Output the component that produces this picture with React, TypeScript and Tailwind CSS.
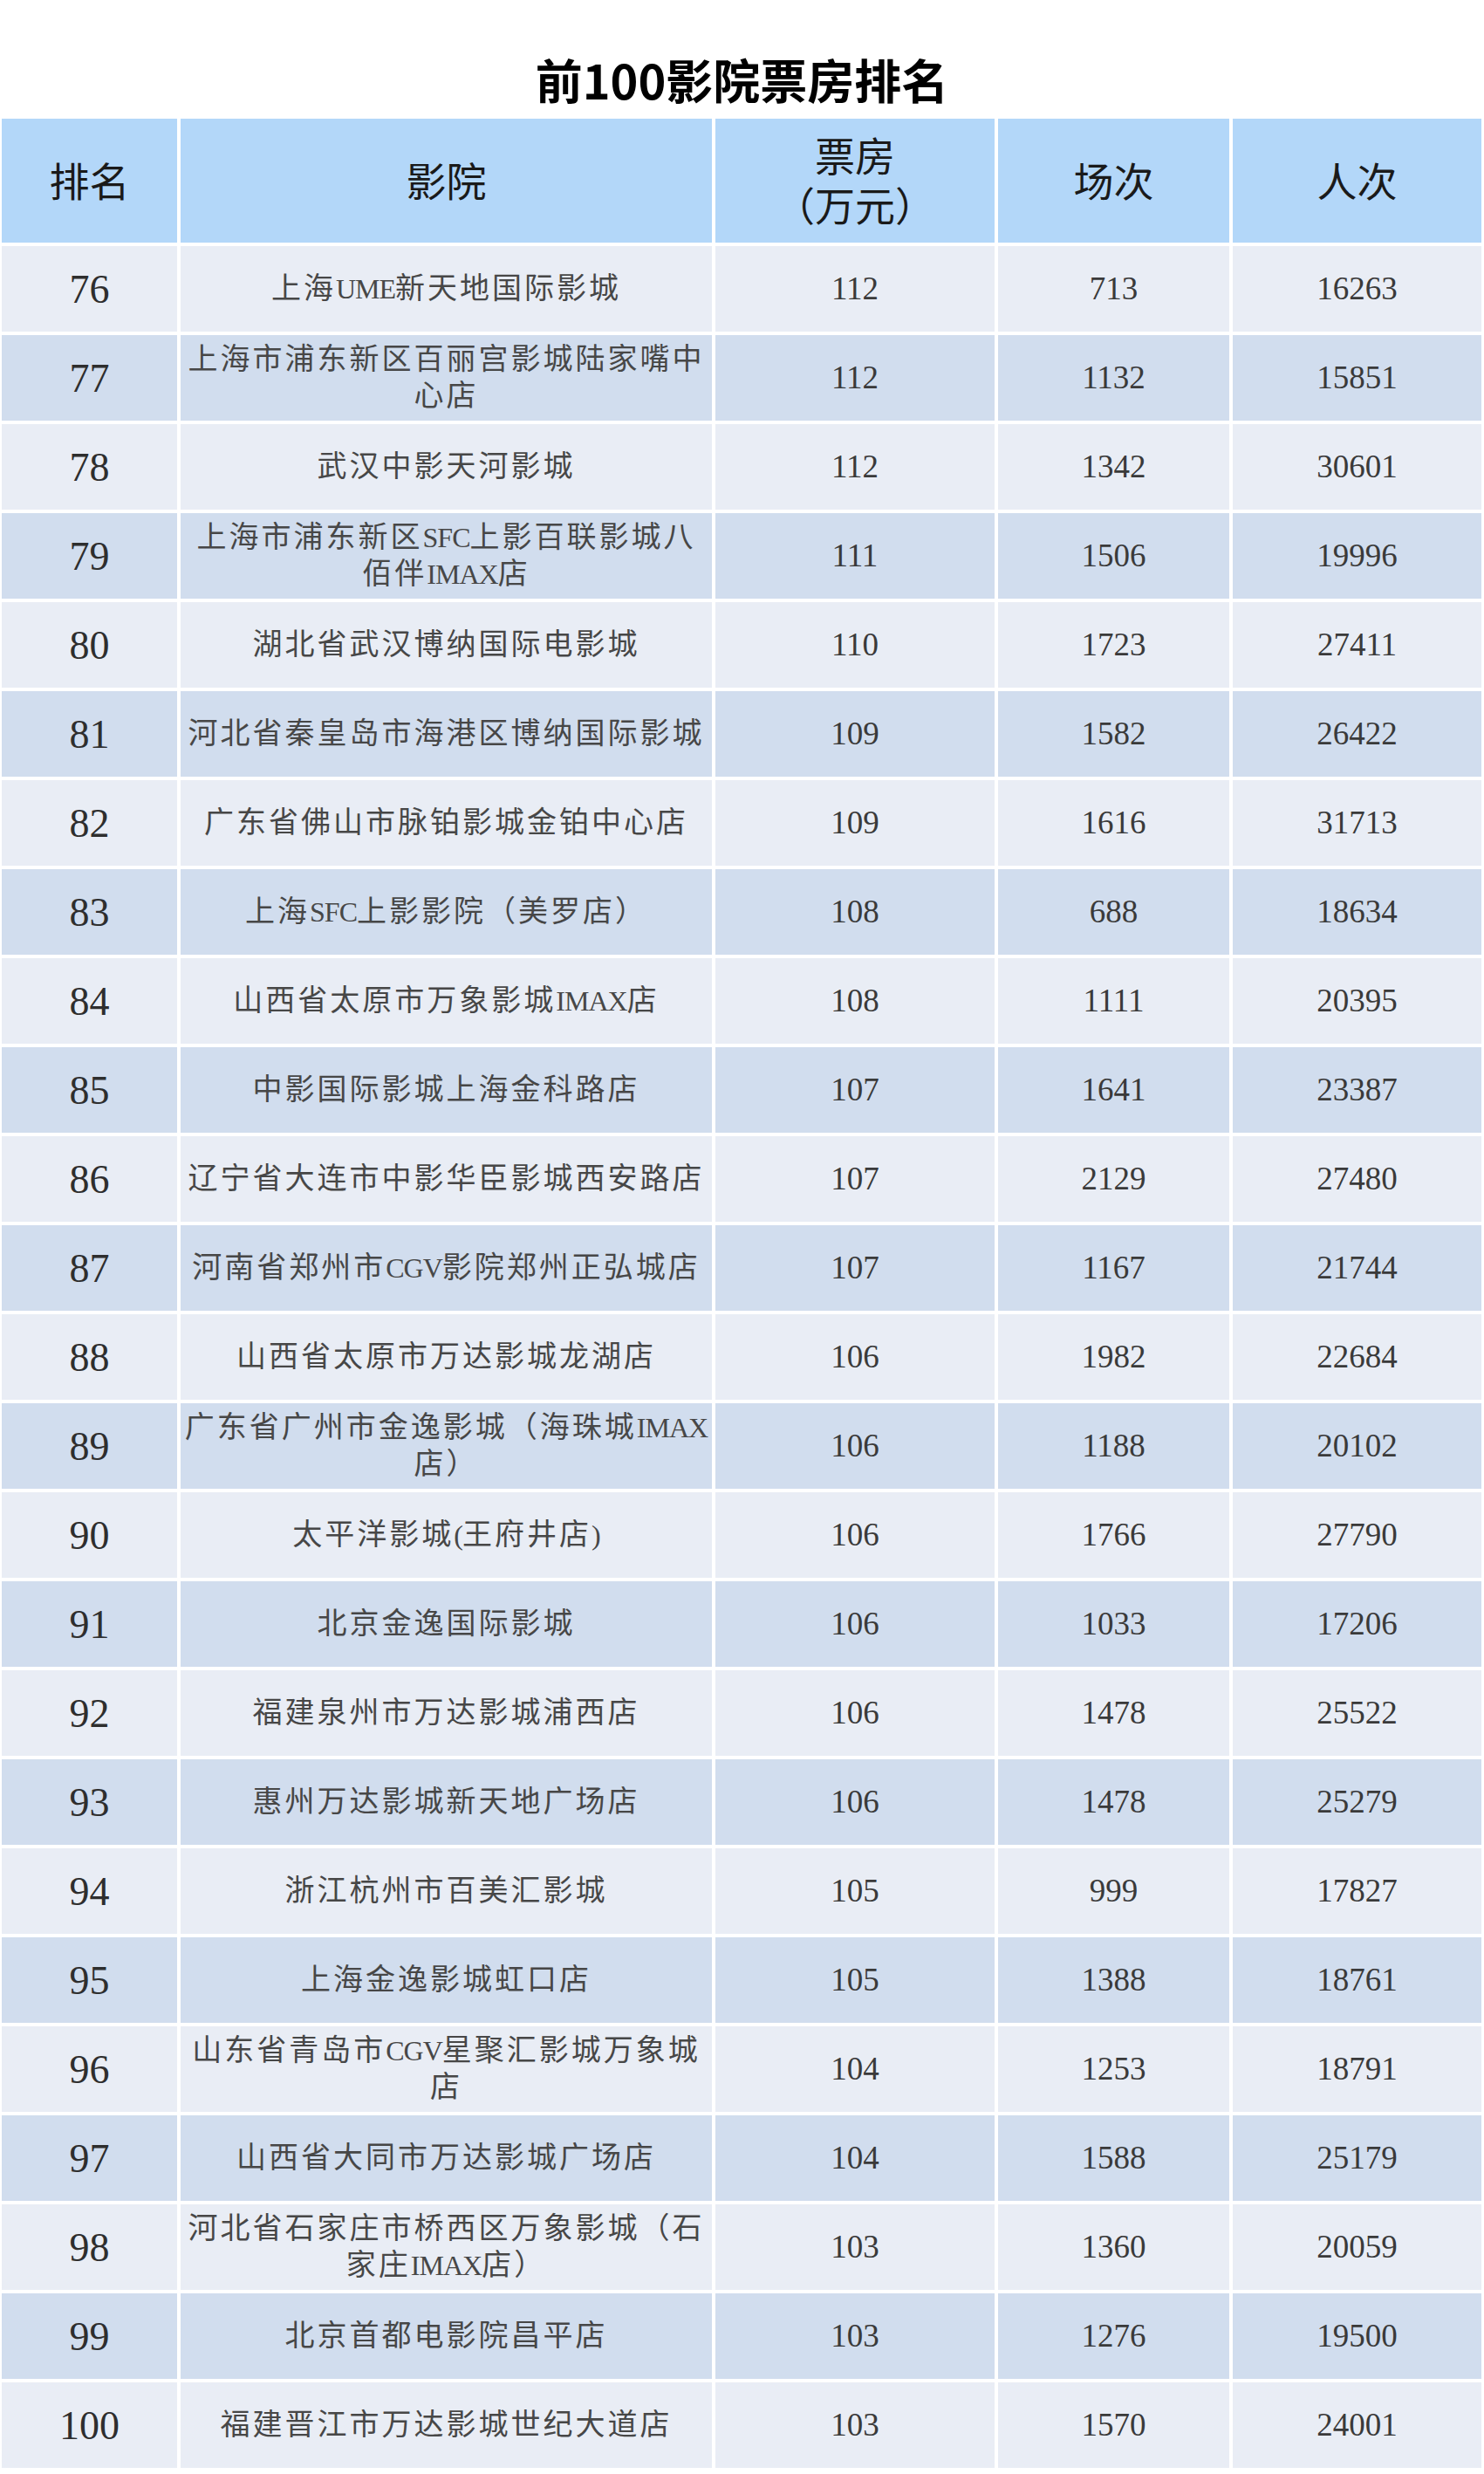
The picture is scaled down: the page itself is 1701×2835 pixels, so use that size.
const rows: [string, string[], string, string, string][] = [
  ["76", ["上海UME新天地国际影城"], "112", "713", "16263"],
  ["77", ["上海市浦东新区百丽宫影城陆家嘴中", "心店"], "112", "1132", "15851"],
  ["78", ["武汉中影天河影城"], "112", "1342", "30601"],
  ["79", ["上海市浦东新区SFC上影百联影城八", "佰伴IMAX店"], "111", "1506", "19996"],
  ["80", ["湖北省武汉博纳国际电影城"], "110", "1723", "27411"],
  ["81", ["河北省秦皇岛市海港区博纳国际影城"], "109", "1582", "26422"],
  ["82", ["广东省佛山市脉铂影城金铂中心店"], "109", "1616", "31713"],
  ["83", ["上海SFC上影影院（美罗店）"], "108", "688", "18634"],
  ["84", ["山西省太原市万象影城IMAX店"], "108", "1111", "20395"],
  ["85", ["中影国际影城上海金科路店"], "107", "1641", "23387"],
  ["86", ["辽宁省大连市中影华臣影城西安路店"], "107", "2129", "27480"],
  ["87", ["河南省郑州市CGV影院郑州正弘城店"], "107", "1167", "21744"],
  ["88", ["山西省太原市万达影城龙湖店"], "106", "1982", "22684"],
  ["89", ["广东省广州市金逸影城（海珠城IMAX", "店）"], "106", "1188", "20102"],
  ["90", ["太平洋影城(王府井店)"], "106", "1766", "27790"],
  ["91", ["北京金逸国际影城"], "106", "1033", "17206"],
  ["92", ["福建泉州市万达影城浦西店"], "106", "1478", "25522"],
  ["93", ["惠州万达影城新天地广场店"], "106", "1478", "25279"],
  ["94", ["浙江杭州市百美汇影城"], "105", "999", "17827"],
  ["95", ["上海金逸影城虹口店"], "105", "1388", "18761"],
  ["96", ["山东省青岛市CGV星聚汇影城万象城", "店"], "104", "1253", "18791"],
  ["97", ["山西省大同市万达影城广场店"], "104", "1588", "25179"],
  ["98", ["河北省石家庄市桥西区万象影城（石", "家庄IMAX店）"], "103", "1360", "20059"],
  ["99", ["北京首都电影院昌平店"], "103", "1276", "19500"],
  ["100", ["福建晋江市万达影城世纪大道店"], "103", "1570", "24001"],
];

const serif = "font-['Liberation_Serif','Noto_Sans_CJK_SC',serif]";

function HeadCell({ children }: { children: React.ReactNode }) {
  return (
    <div
      className={`flex h-[142px] flex-col items-center justify-center pt-[4px] bg-[#b3d7f9] text-[46px] leading-[57px] text-[#1a1a1a] ${serif}`}
    >
      {children}
    </div>
  );
}

// latin bits in the names are set tighter than the CJK characters
function NameLine({ text }: { text: string }) {
  const parts = text.split(/([A-Za-z()]+)/).filter(Boolean);
  return (
    <span className="whitespace-nowrap">
      {parts.map((p, i) =>
        /^[A-Za-z()]+$/.test(p) ? (
          <span key={i} className="text-[32px] tracking-[-1px]">
            {p}
          </span>
        ) : (
          <span key={i}>{p}</span>
        ),
      )}
    </span>
  );
}

export default function App() {
  return (
    <div className="min-h-[2835px] w-[1701px] bg-white">
      <div className="flex h-[136px] items-start justify-center pt-[63px]">
        <h1 className="font-['Noto_Sans_CJK_SC',sans-serif] text-[54px] font-bold leading-[56px] text-black">
          前100影院票房排名
        </h1>
      </div>
      <div className="grid grid-cols-[201px_609px_320px_265px_285px] gap-[4px] px-[2px]">
        <HeadCell>排名</HeadCell>
        <HeadCell>影院</HeadCell>
        <HeadCell>
          <span>票房</span>
          <span>（万元）</span>
        </HeadCell>
        <HeadCell>场次</HeadCell>
        <HeadCell>人次</HeadCell>
        {rows.map(([rank, name, box, shows, people], i) => {
          const bg = i % 2 === 0 ? "bg-[#e9edf5]" : "bg-[#d1ddee]";
          const cell = `flex h-[98px] flex-col items-center justify-center ${bg} ${serif}`;
          return (
            <div key={rank} className="contents">
              <div className={`${cell} text-[46px] text-[#2e2e2e]`}>{rank}</div>
              <div className={`${cell} text-[34px] leading-[42px] tracking-[3px] text-[#474747]`}>
                {name.map((line) => (
                  <NameLine key={line} text={line} />
                ))}
              </div>
              <div className={`${cell} text-[37px] text-[#3a3a3a]`}>{box}</div>
              <div className={`${cell} text-[37px] text-[#3a3a3a]`}>{shows}</div>
              <div className={`${cell} text-[37px] text-[#3a3a3a]`}>{people}</div>
            </div>
          );
        })}
      </div>
    </div>
  );
}
